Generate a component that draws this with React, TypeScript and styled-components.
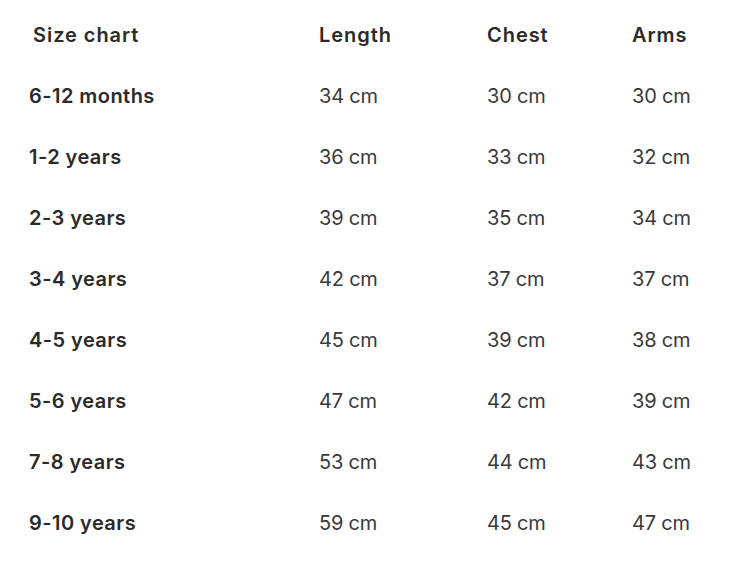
import React from 'react'
import styled, { createGlobalStyle } from 'styled-components'

const GlobalStyle = createGlobalStyle`
  html, body {
    margin: 0;
    padding: 0;
    background: #fff;
  }

  body {
    font-family: Inter, "Noto Sans", "Liberation Sans", sans-serif;
    color: #2b2b2b;
  }
`

const Chart = styled.div`
  display: grid;
  grid-template-columns: 290px 168px 145px 1fr;
  grid-auto-rows: 61px;
  padding: 4px 0 0 29px;
  width: 740px;
  box-sizing: border-box;
`

const Cell = styled.div<{ $head?: boolean; $label?: boolean }>`
  display: flex;
  align-items: center;
  font-size: 20px;
  letter-spacing: ${p => (p.$head ? '0.95px' : p.$label ? '0.45px' : '-0.2px')};
  font-weight: ${p => (p.$head || p.$label ? 600 : 400)};
  color: ${p => (p.$head || p.$label ? '#2a2a2a' : '#3a3a3a')};
`

const Corner = styled(Cell)`
  padding-left: 4px;
`

const rows = [
  ['6-12 months', '34 cm', '30 cm', '30 cm'],
  ['1-2 years', '36 cm', '33 cm', '32 cm'],
  ['2-3 years', '39 cm', '35 cm', '34 cm'],
  ['3-4 years', '42 cm', '37 cm', '37 cm'],
  ['4-5 years', '45 cm', '39 cm', '38 cm'],
  ['5-6 years', '47 cm', '42 cm', '39 cm'],
  ['7-8 years', '53 cm', '44 cm', '43 cm'],
  ['9-10 years', '59 cm', '45 cm', '47 cm'],
]

const App: React.FC = () => {
  return (
    <>
      <GlobalStyle />
      <Chart>
        <Corner $head>Size chart</Corner>
        <Cell $head>Length</Cell>
        <Cell $head>Chest</Cell>
        <Cell $head>Arms</Cell>
        {rows.map(row => (
          <React.Fragment key={row[0]}>
            <Cell $label>{row[0]}</Cell>
            <Cell>{row[1]}</Cell>
            <Cell>{row[2]}</Cell>
            <Cell>{row[3]}</Cell>
          </React.Fragment>
        ))}
      </Chart>
    </>
  )
}

export default App
